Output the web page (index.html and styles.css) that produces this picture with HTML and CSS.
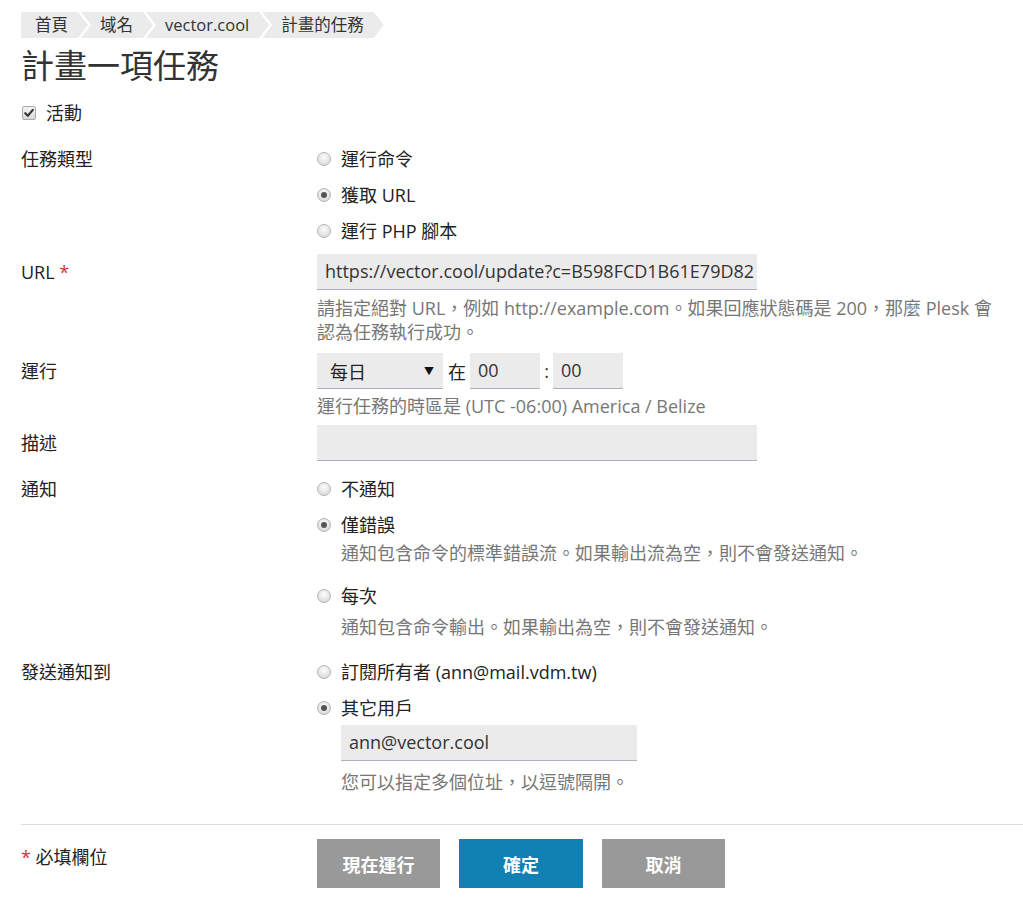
FILE: index.html
```html
<!DOCTYPE html>
<html lang="zh-Hant">
<head>
<meta charset="utf-8">
<title>計畫一項任務</title>
<link rel="stylesheet" href="styles.css">
</head>
<body>
<div class="page">
  <nav class="crumbs">
    <span class="crumb first">首頁</span>
    <span class="crumb">域名</span>
    <span class="crumb">vector.cool</span>
    <span class="crumb">計畫的任務</span>
  </nav>

  <h1 class="title">計畫一項任務</h1>

  <div class="check-row">
    <span class="checkbox"><svg width="10" height="10" viewBox="0 0 10 10"><path d="M1.3 5.2 L3.8 7.8 L8.8 1.8" fill="none" stroke="#333" stroke-width="2.1" stroke-linecap="round" stroke-linejoin="round"/></svg></span>
    <span>活動</span>
  </div>

  <div class="row row-type">
    <div class="label">任務類型</div>
    <div class="control">
      <div class="radio-item"><span class="radio"></span>運行命令</div>
      <div class="radio-item"><span class="radio checked"></span>獲取 URL</div>
      <div class="radio-item"><span class="radio"></span>運行 PHP 腳本</div>
    </div>
  </div>

  <div class="row row-url">
    <div class="label">URL <span class="req">*</span></div>
    <div class="control">
      <div class="field wide">https://vector.cool/update?c=B598FCD1B61E79D82</div>
      <div class="hint hint-url">請指定絕對 URL，例如 http://example.com。如果回應狀態碼是 200，那麼 Plesk 會認為任務執行成功。</div>
    </div>
  </div>

  <div class="row row-run">
    <div class="label">運行</div>
    <div class="control">
      <div class="run-line">
        <div class="select"><span>每日</span><span class="caret">▼</span></div>
        <span class="at">在</span>
        <div class="field time">00</div>
        <span class="colon">:</span>
        <div class="field time">00</div>
      </div>
      <div class="hint hint-tz">運行任務的時區是 (UTC -06:00) America / Belize</div>
    </div>
  </div>

  <div class="row row-desc">
    <div class="label">描述</div>
    <div class="control">
      <div class="field wide"></div>
    </div>
  </div>

  <div class="row row-notify">
    <div class="label">通知</div>
    <div class="control">
      <div class="radio-item"><span class="radio"></span>不通知</div>
      <div class="radio-item"><span class="radio checked"></span>僅錯誤</div>
      <div class="hint sub sub-first">通知包含命令的標準錯誤流。如果輸出流為空，則不會發送通知。</div>
      <div class="radio-item every"><span class="radio"></span>每次</div>
      <div class="hint sub sub-second">通知包含命令輸出。如果輸出為空，則不會發送通知。</div>
    </div>
  </div>

  <div class="row row-send">
    <div class="label">發送通知到</div>
    <div class="control">
      <div class="radio-item"><span class="radio"></span>訂閱所有者 (ann@mail.vdm.tw)</div>
      <div class="radio-item"><span class="radio checked"></span>其它用戶</div>
      <div class="field email">ann@vector.cool</div>
      <div class="hint sub sub-email">您可以指定多個位址，以逗號隔開。</div>
    </div>
  </div>

  <div class="separator"></div>

  <div class="row row-footer">
    <div class="label"><span class="req">*</span> 必填欄位</div>
    <div class="control buttons">
      <button class="btn btn-gray">現在運行</button>
      <button class="btn btn-blue">確定</button>
      <button class="btn btn-gray">取消</button>
    </div>
  </div>
</div>
</body>
</html>
```

FILE: styles.css
```css
* { box-sizing: border-box; }

body {
  margin: 0;
  background: #fff;
  color: #333;
  font-family: "Open Sans", "Noto Sans CJK TC", sans-serif;
  font-size: 18px;
}

.page {
  padding: 12px 0 20px 21px;
}

/* breadcrumbs */
.crumbs {
  display: flex;
  height: 26px;
}
.crumb {
  display: block;
  height: 26px;
  line-height: 26px;
  background: #ebebeb;
  color: #333;
  font-size: 16.5px;
  padding: 0 20px 0 19px;
  margin-left: -7px;
  clip-path: polygon(0 0, calc(100% - 10px) 0, 100% 50%, calc(100% - 10px) 100%, 0 100%, 10px 50%);
}
.crumb.first {
  margin-left: 0;
  padding-left: 14px;
  clip-path: polygon(0 0, calc(100% - 10px) 0, 100% 50%, calc(100% - 10px) 100%, 0 100%);
}

.title {
  margin: 8px 0 0;
  font-size: 33px;
  line-height: 40px;
  font-weight: normal;
  color: #333;
}

.check-row {
  margin-top: 15px;
  height: 24px;
  display: flex;
  align-items: center;
  line-height: 24px;
  color: #222;
}
.checkbox {
  width: 14px;
  height: 14px;
  margin: 0 10px 0 1px;
  border: 1px solid #a9a9a9;
  border-radius: 2px;
  background: linear-gradient(#f4f4f4, #d9d9d9);
  display: flex;
  align-items: center;
  justify-content: center;
}

/* form rows */
.row {
  display: grid;
  grid-template-columns: 296px 1fr;
}
.label {
  line-height: 36px;
  color: #222;
}
.req {
  color: #d0343a;
}
.control {
  color: #333;
}

.radio-item {
  display: flex;
  align-items: center;
  height: 36px;
  line-height: 24px;
  color: #222;
}
.radio {
  width: 14px;
  height: 14px;
  margin-right: 10px;
  border-radius: 50%;
  border: 1px solid #b5b5b5;
  background: radial-gradient(circle at 50% 35%, #fdfdfd, #dcdcdc 75%);
  display: flex;
  align-items: center;
  justify-content: center;
  flex: none;
}
.radio.checked::after {
  content: "";
  width: 6px;
  height: 6px;
  border-radius: 50%;
  background: #555;
}

.field {
  height: 36px;
  line-height: 35px;
  background: #ebebeb;
  border-bottom: 1px solid #aab3bc;
  padding: 0 8px;
  color: #333;
  white-space: nowrap;
  overflow: hidden;
}
.field.wide { width: 440px; }
.field.time { width: 70px; }
.field.email { width: 296px; margin-left: 24px; margin-top: -1px; }

.hint {
  color: #777;
  line-height: 24px;
}
.hint-url { margin-top: 6px; max-width: 682px; }
.hint-tz { margin-top: 5px; }

.sub { margin-left: 24px; }
.sub-first { margin-top: -2px; }
.radio-item.every { margin-top: 13px; }
.sub-second { margin-top: 1px; }
.sub-email { margin-top: 9px; }

.row-type { margin-top: 16px; }
.row-url { margin-top: 5px; }
.row-run { margin-top: 9px; }
.row-desc { margin-top: 7px; }
.row-notify { margin-top: 10px; }
.row-send { margin-top: 15px; }

.run-line {
  display: flex;
  align-items: center;
  height: 36px;
}
.select {
  width: 126px;
  height: 36px;
  background: #ebebeb;
  border-bottom: 1px solid #aab3bc;
  padding: 0 9px 0 13px;
  display: flex;
  align-items: center;
  justify-content: space-between;
  color: #222;
}
.caret {
  font-size: 10px;
  color: #111;
}
.at {
  margin: 0 4px 0 5px;
  color: #222;
}
.colon {
  width: 13px;
  text-align: center;
  color: #333;
}

.separator {
  margin-top: 30px;
  height: 1px;
  background: #ddd;
}

.row-footer { margin-top: 14px; }
.buttons {
  display: flex;
  gap: 19px;
}
.btn {
  width: 123px;
  height: 49px;
  border: none;
  color: #fff;
  font-family: "Open Sans", "Noto Sans CJK TC", sans-serif;
  font-size: 18px;
  font-weight: bold;
  padding: 0;
}
.btn-gray { background: #999; }
.btn-blue { background: #1180b2; width: 124px; }
```
